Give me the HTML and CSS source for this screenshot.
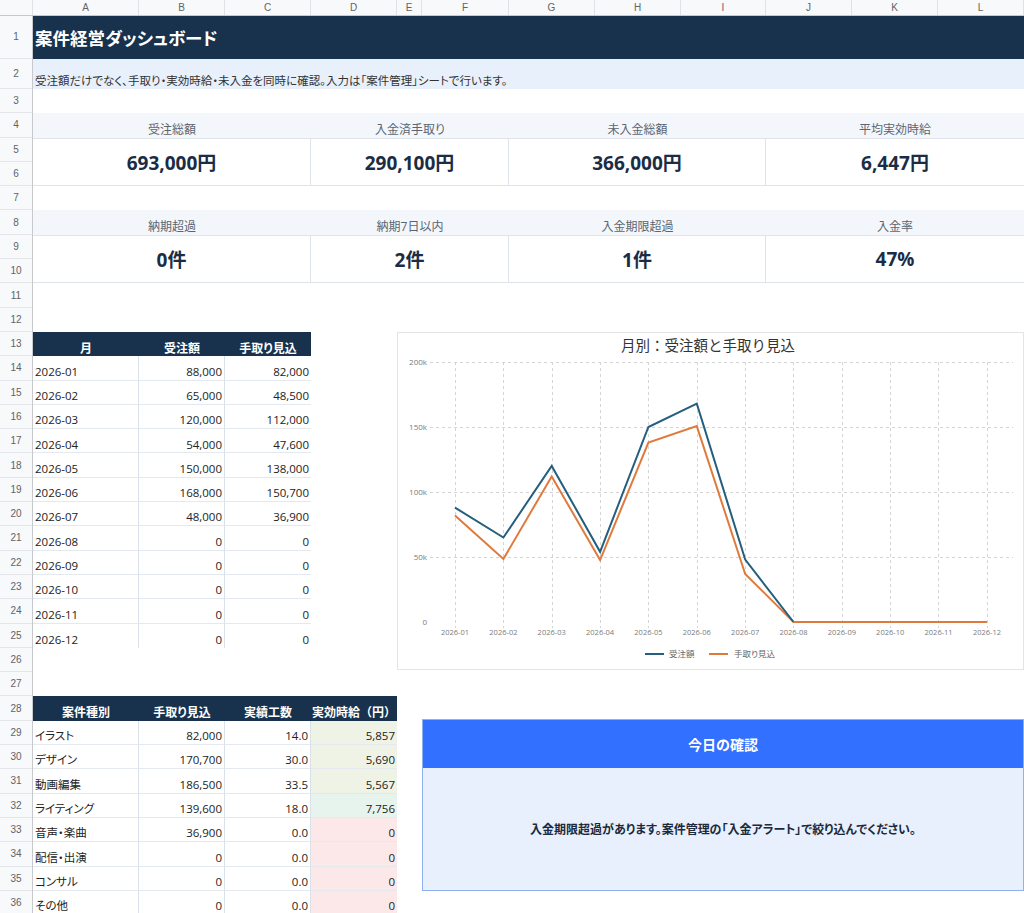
FILE: index.html
```html
<!DOCTYPE html>
<html lang="ja">
<head>
<meta charset="utf-8">
<title>案件経営ダッシュボード</title>
<link rel="stylesheet" href="styles.css">
</head>
<body>
<div class="sheet">
  <div class="colhdr">
    <div class="ch corner"></div>
    <div class="ch">A</div><div class="ch">B</div><div class="ch">C</div><div class="ch">D</div>
    <div class="ch">E</div><div class="ch">F</div><div class="ch">G</div><div class="ch">H</div>
    <div class="ch">I</div><div class="ch">J</div><div class="ch">K</div><div class="ch">L</div>
  </div>
  <div class="body">
    <div class="rowhdr">
      <div class="rh">1</div><div class="rh">2</div><div class="rh">3</div><div class="rh">4</div>
      <div class="rh">5</div><div class="rh">6</div><div class="rh">7</div><div class="rh">8</div>
      <div class="rh">9</div><div class="rh">10</div><div class="rh">11</div><div class="rh">12</div>
      <div class="rh">13</div><div class="rh">14</div><div class="rh">15</div><div class="rh">16</div>
      <div class="rh">17</div><div class="rh">18</div><div class="rh">19</div><div class="rh">20</div>
      <div class="rh">21</div><div class="rh">22</div><div class="rh">23</div><div class="rh">24</div>
      <div class="rh">25</div><div class="rh">26</div><div class="rh">27</div><div class="rh">28</div>
      <div class="rh">29</div><div class="rh">30</div><div class="rh">31</div><div class="rh">32</div>
      <div class="rh">33</div><div class="rh">34</div><div class="rh">35</div><div class="rh">36</div>
    </div>
    <div class="grid">
      <div class="title">案件経営ダッシュボード</div>
      <div class="subtitle">受注額だけでなく、手取り・実効時給・未入金を同時に確認。入力は「案件管理」シートで行います。</div>

      <div class="band band-1"></div>
      <div class="kpi kpi-r1 kc-1"><div class="kl">受注総額</div><div class="kv">693,000円</div></div>
      <div class="kpi kpi-r1 kc-2"><div class="kl">入金済手取り</div><div class="kv">290,100円</div></div>
      <div class="kpi kpi-r1 kc-3"><div class="kl">未入金総額</div><div class="kv">366,000円</div></div>
      <div class="kpi kpi-r1 kc-4 last"><div class="kl">平均実効時給</div><div class="kv">6,447円</div></div>

      <div class="band band-2"></div>
      <div class="kpi kpi-r2 kc-1"><div class="kl">納期超過</div><div class="kv">0件</div></div>
      <div class="kpi kpi-r2 kc-2"><div class="kl">納期7日以内</div><div class="kv">2件</div></div>
      <div class="kpi kpi-r2 kc-3"><div class="kl">入金期限超過</div><div class="kv">1件</div></div>
      <div class="kpi kpi-r2 kc-4 last"><div class="kl">入金率</div><div class="kv">47%</div></div>

      <div class="tbl tbl-month">
        <div class="th">月</div><div class="th">受注額</div><div class="th">手取り見込</div>
        <div class="td l">2026-01</div><div class="td r">88,000</div><div class="td r">82,000</div>
        <div class="td l">2026-02</div><div class="td r">65,000</div><div class="td r">48,500</div>
        <div class="td l">2026-03</div><div class="td r">120,000</div><div class="td r">112,000</div>
        <div class="td l">2026-04</div><div class="td r">54,000</div><div class="td r">47,600</div>
        <div class="td l">2026-05</div><div class="td r">150,000</div><div class="td r">138,000</div>
        <div class="td l">2026-06</div><div class="td r">168,000</div><div class="td r">150,700</div>
        <div class="td l">2026-07</div><div class="td r">48,000</div><div class="td r">36,900</div>
        <div class="td l">2026-08</div><div class="td r">0</div><div class="td r">0</div>
        <div class="td l">2026-09</div><div class="td r">0</div><div class="td r">0</div>
        <div class="td l">2026-10</div><div class="td r">0</div><div class="td r">0</div>
        <div class="td l">2026-11</div><div class="td r">0</div><div class="td r">0</div>
        <div class="td l nb">2026-12</div><div class="td r nb">0</div><div class="td r nb">0</div>
      </div>

      <div class="chart">
        <svg width="627" height="339" viewBox="0 0 627 339" xmlns="http://www.w3.org/2000/svg">
          <rect x="0.5" y="0.5" width="626" height="337" fill="#fff" stroke="#e4e4e4"/>
          <text x="311" y="19" text-anchor="middle" class="c-title">月別：受注額と手取り見込</text>
          <g stroke="#d4d4d4" stroke-dasharray="3 3" stroke-width="1">
            <line x1="33" y1="30.5" x2="616" y2="30.5"/>
            <line x1="33" y1="95.5" x2="616" y2="95.5"/>
            <line x1="33" y1="160.5" x2="616" y2="160.5"/>
            <line x1="33" y1="225.5" x2="616" y2="225.5"/>
          </g>
          <g stroke="#d4d4d4" stroke-dasharray="3 3" stroke-width="1">
            <line x1="58.5" y1="30" x2="58.5" y2="296"/>
            <line x1="106.5" y1="30" x2="106.5" y2="296"/>
            <line x1="155.5" y1="30" x2="155.5" y2="296"/>
            <line x1="203.5" y1="30" x2="203.5" y2="296"/>
            <line x1="251.5" y1="30" x2="251.5" y2="296"/>
            <line x1="300.5" y1="30" x2="300.5" y2="296"/>
            <line x1="348.5" y1="30" x2="348.5" y2="296"/>
            <line x1="396.5" y1="30" x2="396.5" y2="296"/>
            <line x1="445.5" y1="30" x2="445.5" y2="296"/>
            <line x1="493.5" y1="30" x2="493.5" y2="296"/>
            <line x1="541.5" y1="30" x2="541.5" y2="296"/>
            <line x1="590.5" y1="30" x2="590.5" y2="296"/>
          </g>
          <g class="ylab" text-anchor="end">
            <text x="30" y="33">200k</text>
            <text x="30" y="98">150k</text>
            <text x="30" y="163">100k</text>
            <text x="30" y="228">50k</text>
            <text x="30" y="293">0</text>
          </g>
          <g class="xlab" text-anchor="middle">
            <text x="58" y="303">2026-01</text>
            <text x="106.4" y="303">2026-02</text>
            <text x="154.7" y="303">2026-03</text>
            <text x="203.1" y="303">2026-04</text>
            <text x="251.4" y="303">2026-05</text>
            <text x="299.8" y="303">2026-06</text>
            <text x="348.2" y="303">2026-07</text>
            <text x="396.5" y="303">2026-08</text>
            <text x="444.9" y="303">2026-09</text>
            <text x="493.2" y="303">2026-10</text>
            <text x="541.6" y="303">2026-11</text>
            <text x="590" y="303">2026-12</text>
          </g>
          <polyline fill="none" stroke="#e07a3c" stroke-width="2" points="58,183.4 106.4,227 154.7,144.4 203.1,228.1 251.4,110.6 299.8,94.1 348.2,242 396.5,290 444.9,290 493.2,290 541.6,290 590,290"/>
          <polyline fill="none" stroke="#245f7e" stroke-width="2" points="58,175.6 106.4,205.5 154.7,134 203.1,219.8 251.4,95 299.8,71.6 348.2,227.6 396.5,290"/>
          <line x1="396.5" y1="290" x2="590" y2="290" stroke="#e07a3c" stroke-width="2"/>
          <g class="legend">
            <line x1="248" y1="322" x2="267" y2="322" stroke="#245f7e" stroke-width="2"/>
            <text x="272" y="325">受注額</text>
            <line x1="312" y1="322" x2="331" y2="322" stroke="#e07a3c" stroke-width="2"/>
            <text x="337" y="325">手取り見込</text>
          </g>
        </svg>
      </div>

      <div class="tbl tbl-type">
        <div class="th">案件種別</div><div class="th">手取り見込</div><div class="th">実績工数</div><div class="th full">実効時給（円）</div>
        <div class="td l">イラスト</div><div class="td r">82,000</div><div class="td r">14.0</div><div class="td r g1">5,857</div>
        <div class="td l">デザイン</div><div class="td r">170,700</div><div class="td r">30.0</div><div class="td r g1">5,690</div>
        <div class="td l">動画編集</div><div class="td r">186,500</div><div class="td r">33.5</div><div class="td r g1">5,567</div>
        <div class="td l">ライティング</div><div class="td r">139,600</div><div class="td r">18.0</div><div class="td r g2">7,756</div>
        <div class="td l">音声・楽曲</div><div class="td r">36,900</div><div class="td r">0.0</div><div class="td r p1">0</div>
        <div class="td l">配信・出演</div><div class="td r">0</div><div class="td r">0.0</div><div class="td r p1">0</div>
        <div class="td l">コンサル</div><div class="td r">0</div><div class="td r">0.0</div><div class="td r p1">0</div>
        <div class="td l">その他</div><div class="td r">0</div><div class="td r">0.0</div><div class="td r p1">0</div>
      </div>

      <div class="today">
        <div class="today-h">今日の確認</div>
        <div class="today-b">入金期限超過があります。案件管理の「入金アラート」で絞り込んでください。</div>
      </div>
    </div>
  </div>
</div>
</body>
</html>
```

FILE: styles.css
```css
:root {
  --rows: 42.5px 30.5px repeat(34, 24.3px);
  --navy: #18324e;
}
* { box-sizing: border-box; }
html, body { margin: 0; padding: 0; background: #fff; }
body {
  font-family: "Open Sans", "Noto Sans CJK JP", sans-serif;
  font-feature-settings: "palt";
  color: #222;
  overflow: hidden;
}
.sheet { width: 1024px; height: 913px; overflow: hidden; }

.colhdr {
  display: grid;
  grid-template-columns: 33px 106px 86px 86px 86px 25px 87px 86px 86px 85px 86px 86px 86px;
  height: 16px;
  background: #f8f9fa;
  border-bottom: 1px solid #c7c9cc;
}
.ch {
  border-right: 1px solid #e0e2e5;
  font-family: "Liberation Sans", Arial, sans-serif;
  font-size: 10px;
  color: #5f6368;
  display: flex;
  align-items: center;
  justify-content: center;
}

.body { display: flex; }
.rowhdr {
  width: 33px;
  flex: none;
  display: grid;
  grid-template-rows: var(--rows);
  background: #f8f9fa;
  border-right: 1px solid #c7c9cc;
}
.rh {
  border-bottom: 1px solid #e3e5e8;
  font-family: "Liberation Sans", Arial, sans-serif;
  font-size: 10px;
  color: #5f6368;
  display: flex;
  align-items: center;
  justify-content: center;
}

.grid {
  flex: 1;
  display: grid;
  grid-template-columns: 106px 86px 86px 86px 25px 87px 86px 86px 85px 86px 86px 86px;
  grid-template-rows: var(--rows);
}

.title {
  grid-column: 1 / -1;
  grid-row: 1;
  background: var(--navy);
  color: #fff;
  font-weight: 700;
  font-size: 17.5px;
  display: flex;
  align-items: center;
  padding-left: 2px;
}
.subtitle {
  grid-column: 1 / -1;
  grid-row: 2;
  background: #e8f0fb;
  color: #333;
  font-size: 11.5px;
  display: flex;
  align-items: flex-end;
  padding: 0 2px 1px;
}

.band { grid-column: 1 / -1; background: #f3f7fc; }
.band-1 { grid-row: 4; }
.band-2 { grid-row: 8; }

.kpi {
  display: grid;
  grid-template-rows: 24.3px 1fr;
}
.kpi-r1 { grid-row: 4 / span 3; }
.kpi-r2 { grid-row: 8 / span 3; }
.kc-1 { grid-column: 1 / 4; }
.kc-2 { grid-column: 4 / 7; }
.kc-3 { grid-column: 7 / 10; }
.kc-4 { grid-column: 10 / 13; }
.kl {
  font-size: 12px;
  color: #5b6570;
  display: flex;
  align-items: flex-end;
  justify-content: center;
  padding-bottom: 0;
  line-height: 1.3;
}
.kv {
  border-top: 1px solid #dfe4ea;
  border-bottom: 1px solid #dfe4ea;
  border-right: 1px solid #dfe4ea;
  font-size: 19px;
  font-weight: 700;
  color: #1b2d44;
  display: flex;
  align-items: center;
  justify-content: center;
}
.last .kv { border-right: none; }

.tbl { display: grid; grid-auto-rows: 24.3px; }
.tbl-month {
  grid-column: 1 / 4;
  grid-row: 13 / 26;
  grid-template-columns: 106px 86px 86px;
}
.tbl-type {
  grid-column: 1 / 5;
  grid-row: 28 / 37;
  grid-template-columns: 106px 86px 86px 86px;
}
.th {
  background: var(--navy);
  color: #fff;
  font-weight: 700;
  font-size: 12px;
  line-height: 1.3;
  display: flex;
  align-items: flex-end;
  justify-content: center;
  padding-bottom: 0;
}
.th.full { font-feature-settings: normal; }
.td {
  font-size: 11.5px;
  line-height: 1.3;
  color: #222;
  display: flex;
  align-items: flex-end;
  padding: 0 2px 0;
  border-bottom: 1px solid #e4e9ef;
  border-right: 1px solid #d9e1ea;
}
.td.l { justify-content: flex-start; }
.td.r { justify-content: flex-end; }
.tbl-month .td:nth-child(3n), .tbl-type .td:nth-child(4n) { border-right: none; }
.td.nb { border-bottom: none; }
.g1 { background: #eff3e5; }
.g2 { background: #e7f4ed; }
.p1 { background: #fce8e8; }

.chart {
  grid-column: 5 / 13;
  grid-row: 13 / 27;
}
.chart svg { display: block; }
.c-title { font-size: 14.5px; fill: #333; font-feature-settings: normal; }
.ylab text { font-size: 8px; fill: #7a7a7a; }
.xlab text { font-size: 7.5px; fill: #7a7a7a; }
.legend text { font-size: 8.5px; fill: #666; }

.today {
  grid-column: 6 / 13;
  grid-row: 29 / 36;
  display: grid;
  grid-template-rows: 48.6px 1fr;
  border: 1px solid #8fb1f3;
  margin-top: -2px;
}
.today-h {
  background: #3270ff;
  color: #fff;
  font-weight: 700;
  font-size: 14px;
  display: flex;
  align-items: center;
  justify-content: center;
}
.today-b {
  background: #e8f0fd;
  color: #1c2a3c;
  font-weight: 700;
  font-size: 12px;
  display: flex;
  align-items: center;
  justify-content: center;
}
```
